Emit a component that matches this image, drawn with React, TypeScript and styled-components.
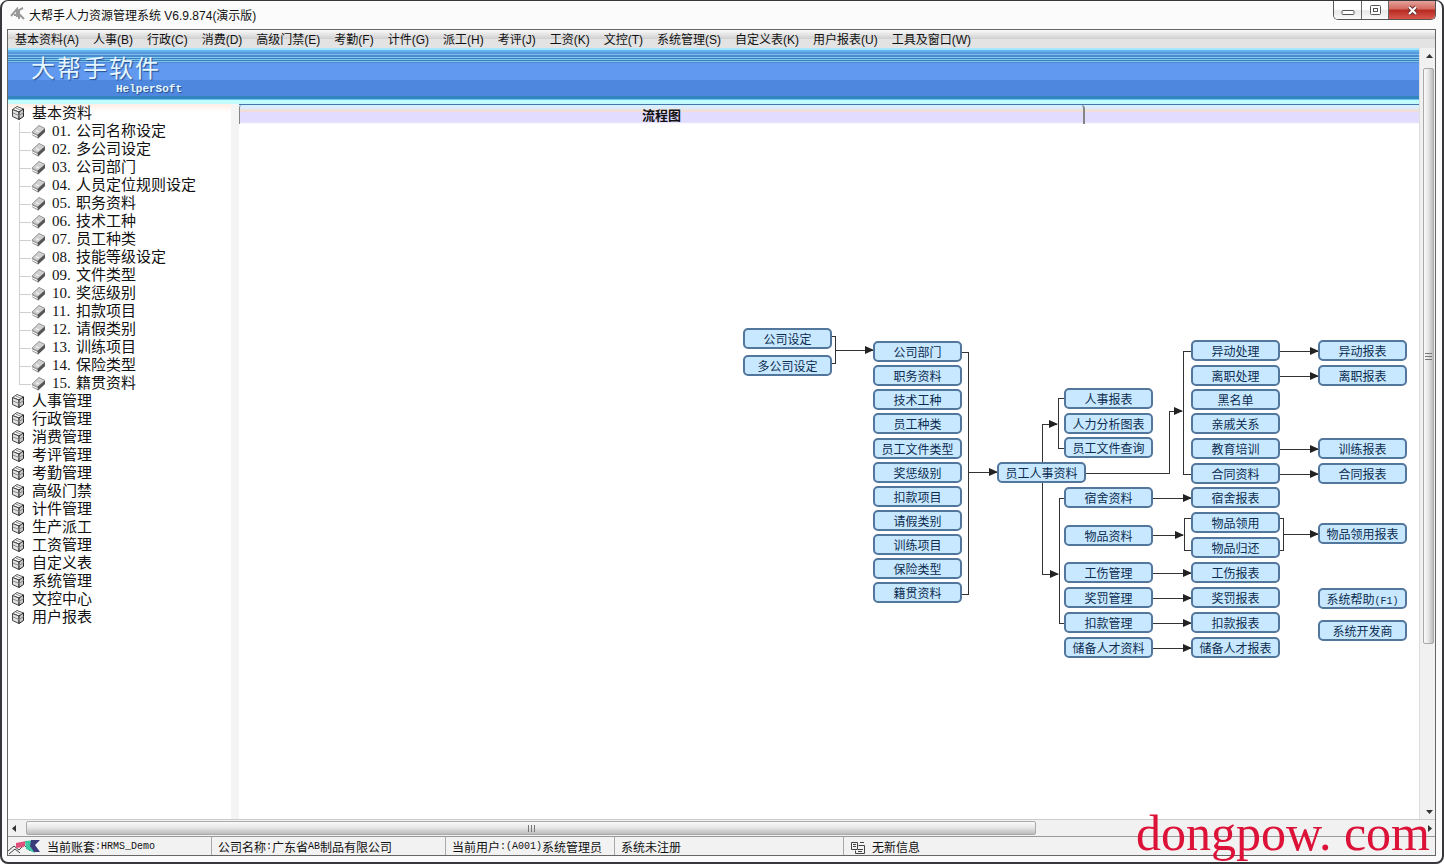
import React from "react";
import styled, { createGlobalStyle, css } from "styled-components";

const GlobalStyle = createGlobalStyle`
  * { box-sizing: border-box; }
  body {
    margin: 0;
    background: #fff;
    color: #111;
    font: 12px/16px "Open Sans", "Noto Sans CJK SC", sans-serif;
  }
  button {
    margin: 0;
    padding: 0;
    border: 0;
    background: none;
    color: inherit;
    font: inherit;
    white-space: nowrap;
  }
  ul { margin: 0; padding: 0; list-style: none; }
`;

const Frame = styled.div`
  position: relative;
  display: flex;
  flex-direction: column;
  min-height: 100vh;
  padding: 0 6px 6px 5px;
  border: 2px solid #37373b;
  border-top-width: 1px;
  border-radius: 8px;
  background: #fbfbfb;
`;

const TitleBar = styled.header`
  display: flex;
  align-items: flex-start;
  height: 28px;
  padding-left: 3px;
`;

const TitleIcon = styled.svg`
  width: 16px;
  height: 14px;
  margin-top: 6px;
`;

const Title = styled.h1`
  flex: 1;
  margin: 5px 0 0 3px;
  font-family: "Liberation Sans", "Noto Sans CJK SC", sans-serif;
  font-size: 12px;
  font-weight: 400;
  line-height: 20px;
`;

const CaptionButtons = styled.div`
  display: flex;
  height: 19px;
  border: 1px solid #555;
  border-top: 0;
  border-radius: 0 0 5px 5px;
  overflow: hidden;
`;

const CaptionButton = styled.button<{ $close?: boolean }>`
  display: grid;
  place-items: center;
  width: ${(p) => (p.$close ? 47 : 27)}px;
  border-left: 1px solid #666;
  background: linear-gradient(#fff 0 45%, #e8e8e8 55%, #fafafa);
  &:first-child { border-left: 0; }
  ${(p) =>
    p.$close &&
    css`
      background: linear-gradient(#e2a39b 0, #d4685f 45%, #b52a20 50%, #d9564d);
    `}
`;

const Client = styled.div`
  display: flex;
  flex: 1;
  flex-direction: column;
  border: 1px solid #666;
`;

const MenuBar = styled.nav`
  display: flex;
  gap: 14px;
  height: 18px;
  padding: 2px 7px 0;
  background: linear-gradient(#fafafa, #cfcfcf 9px, #e3e3e3 9px);
  font-family: "Liberation Sans", "Noto Sans CJK SC", sans-serif;
`;

const MenuButton = styled.button`
  line-height: 16px;
`;

const Workspace = styled.div`
  display: flex;
  flex: 1;
`;

const Main = styled.div`
  display: flex;
  flex: 1;
  flex-direction: column;
  min-width: 0;
  background: #fff;
`;

const Banner = styled.div`
  height: 52px;
  padding-left: 23px;
  background: linear-gradient(
    #a6e6ff 0 2px, #62b2ec 2px 4px, #5796da 4px 6px, #78bff0 6px 7px,
    #4b8acb 7px 9px, #80cdf3 9px 10px, #3d7fbd 10px 11px, #7dc6ee 11px 12px,
    #3b7dbb 12px 13px, #7fc4f0 13px 14px, #4b88cf 14px 15px,
    #6099ef 15px 32px, #4e87de 32px 48px, #3286bd 48px 51px, #65c5f0 51px
  );
`;

const Brand = styled.div`
  display: inline-flex;
  flex-direction: column;
  color: #e4f6ff;
  text-shadow: 1px 1px 1px #234e92;
`;

const BrandName = styled.span`
  font-family: "Liberation Sans", "Noto Sans CJK SC", sans-serif;
  font-size: 24px;
  font-weight: 400;
  line-height: 42px;
  letter-spacing: 2px;
`;

const BrandLatin = styled.span`
  margin-top: -7px;
  padding-left: 85px;
  font: 700 11px/12px "Liberation Mono", monospace;
`;

const BannerEdge = styled.div`
  height: 4px;
  background: #c4fbff;
`;

const Split = styled.div`
  display: flex;
  flex: 1;
`;

const Sidebar = styled.nav`
  width: 231px;
  border-right: 8px solid #f4f4f4;
  background: linear-gradient(#ffeee5, #fff 8px);
  font-family: "Liberation Serif", "Noto Sans CJK SC", serif;
  font-size: 15px;
`;

const TreeButton = styled.button`
  display: flex;
  align-items: center;
  height: 18px;
  line-height: 18px;
`;

const GroupIcon = styled.svg`
  width: 14px;
  height: 16px;
  margin: 0 7px 0 3px;
`;

const Leaves = styled.ul`
  margin-left: 11px;
`;

const Leaf = styled.li`
  display: flex;
  align-items: center;
  height: 18px;
  background:
    linear-gradient(#cfcfcf, #cfcfcf) 0 0 / 1px 100% no-repeat,
    linear-gradient(#cfcfcf, #cfcfcf) 0 10px / 12px 1px no-repeat;
  &:last-child {
    background-size: 1px 10px, 12px 1px;
  }
`;

const LeafIcon = styled.svg`
  width: 15px;
  height: 16px;
  margin: 2px 6px 0 12px;
`;

const LeafNumber = styled.span`
  width: 24px;
  text-align: left;
`;

const Content = styled.main`
  flex: 1;
  min-width: 0;
`;

const TabStrip = styled.div`
  display: flex;
  height: 20px;
  border-top: 1px solid #4277ac;
  background: linear-gradient(#d9efff 0 2px, #f1ddd6 6px 7px, #e2dcff 7px 17px, #fff);
`;

const Tab = styled.button`
  width: 846px;
  max-width: 72%;
  border: 2px solid #858585;
  border-width: 0 2px 0 1px;
  border-radius: 3px 4px 0 0;
  font-size: 13px;
  font-weight: 700;
  line-height: 18px;
`;

const Canvas = styled.div`
  position: relative;
  height: 694px;
  overflow: hidden;
  font-family: "Noto Sans CJK SC", sans-serif;
`;

const Wires = styled.svg`
  position: absolute;
  inset: 0;
  width: 100%;
  height: 100%;
`;

const Node = styled.button`
  position: absolute;
  width: 89px;
  height: 21px;
  border: 2px solid #53779c;
  border-radius: 5px;
  background: #c8e8ff;
  color: #0c2c50;
  line-height: 17px;
`;

const NodeKey = styled.span`
  font-family: "Liberation Mono", monospace;
  font-size: 10px;
`;

const VScroll = styled.div`
  display: flex;
  flex-direction: column;
  width: 16px;
  padding: 0 1px 0 3px;
  background: #f1f1f1;
  border-left: 1px solid #ddd;
`;

const HScroll = styled.div`
  display: flex;
  height: 17px;
  border-top: 1px solid #ccc;
  background: #f1f1f1;
`;

const ArrowButton = styled.button`
  display: grid;
  place-items: center;
  min-width: 12px;
  min-height: 16px;
`;

const Track = styled.div`
  flex: 1;
`;

const thumb = css`
  display: grid;
  place-items: center;
  border: 1px solid #aaa;
  border-radius: 2px;
`;

const VThumb = styled.div`
  ${thumb}
  height: 78%;
  margin-top: 4px;
  background: linear-gradient(90deg, #fafafa, #e8e8e8 45%, #bbb);
`;

const HThumb = styled.div`
  ${thumb}
  width: 72%;
  height: 14px;
  margin: 1px 0 0 6px;
  background: linear-gradient(#fafafa, #e8e8e8 45%, #bbb);
`;

const StatusBar = styled.footer`
  display: flex;
  height: 19px;
  border-top: 1px solid #999;
  background: #f2f2f2;
  font-family: "Noto Sans CJK SC", sans-serif;
  line-height: 16px;
`;

const StatusPanel = styled.div<{ $width?: number }>`
  display: flex;
  align-items: center;
  flex: ${(p) => (p.$width ? `0 0 ${p.$width}px` : "1")};
  padding: 2px 0 0 6px;
  border-left: 1px solid #aaa;
  white-space: pre;
  &:first-child { padding-left: 0; border-left: 0; }
  svg { margin-right: 6px; }
`;

const Half = styled.span`
  font: 10px/16px "Liberation Mono", monospace;
`;

const Watermark = styled.div`
  position: absolute;
  right: 12px;
  bottom: 1px;
  color: #dc1238;
  font: 50px/56px "Liberation Serif", serif;
  pointer-events: none;
`;

const menus = [
  "基本资料(A)", "人事(B)", "行政(C)", "消费(D)", "高级门禁(E)", "考勤(F)", "计件(G)", "派工(H)",
  "考评(J)", "工资(K)", "文控(T)", "系统管理(S)", "自定义表(K)", "用户报表(U)", "工具及窗口(W)",
];

const leaves = [
  "公司名称设定", "多公司设定", "公司部门", "人员定位规则设定", "职务资料", "技术工种", "员工种类",
  "技能等级设定", "文件类型", "奖惩级别", "扣款项目", "请假类别", "训练项目", "保险类型", "籍贯资料",
];

const groups = [
  "人事管理", "行政管理", "消费管理", "考评管理", "考勤管理", "高级门禁", "计件管理", "生产派工",
  "工资管理", "自定义表", "系统管理", "文控中心", "用户报表",
];

/* Flow chart: each column has its left edge and its [top, label] nodes. */
const columns: { left: number; nodes: [number, string][] }[] = [
  { left: 504, nodes: [[204, "公司设定"], [231, "多公司设定"]] },
  {
    left: 634,
    nodes: [
      [217, "公司部门"], [241, "职务资料"], [265, "技术工种"], [289, "员工种类"], [314, "员工文件类型"],
      [338, "奖惩级别"], [362, "扣款项目"], [386, "请假类别"], [410, "训练项目"], [434, "保险类型"],
      [458, "籍贯资料"],
    ],
  },
  { left: 758, nodes: [[338, "员工人事资料"]] },
  {
    left: 825,
    nodes: [
      [264, "人事报表"], [289, "人力分析图表"], [313, "员工文件查询"], [363, "宿舍资料"], [401, "物品资料"],
      [438, "工伤管理"], [463, "奖罚管理"], [488, "扣款管理"], [513, "储备人才资料"],
    ],
  },
  {
    left: 952,
    nodes: [
      [216, "异动处理"], [241, "离职处理"], [265, "黑名单"], [289, "亲戚关系"], [314, "教育培训"],
      [339, "合同资料"], [363, "宿舍报表"], [388, "物品领用"], [413, "物品归还"], [438, "工伤报表"],
      [463, "奖罚报表"], [488, "扣款报表"], [513, "储备人才报表"],
    ],
  },
  {
    left: 1079,
    nodes: [
      [216, "异动报表"], [241, "离职报表"], [314, "训练报表"], [339, "合同报表"], [399, "物品领用报表"],
      [464, "系统帮助(F1)"], [496, "系统开发商"],
    ],
  },
];

const brackets = [
  "M593 212h3v27h-3", "M723 228h6v242h-6", "M825 274h-6v50h6", "M825 374h-5v125h5",
  "M952 227h-8v123h8", "M952 394h-7v32h7", "M1041 394h3v32h-3",
];

const arrows = [
  "M596 226H634", "M729 348H758", "M803 338V300H818", "M803 359V450H819", "M847 349H930V287H943",
  "M914 411H944", "M1044 410H1079",
  ...[374, 449, 474, 499, 524].map((y) => `M914 ${y}H952`),
  ...[227, 252, 325, 350].map((y) => `M1041 ${y}H1079`),
];

const CubeIcon = () => (
  <GroupIcon viewBox="0 0 14 16" aria-hidden="true">
    <path d="M1.500 4.500 6 1.500 12.500 4 8 7Z" fill="#fff" stroke="#555" />
    <path d="M1.500 4.500 8 7V14.500L1.500 11.500Z" fill="#e2e2e2" stroke="#444" />
    <path d="M8 7 12.500 4V11.500L8 14.500Z" fill="#c9c9c9" stroke="#222" />
    <path d="M2 8 8 10.500 12.500 7.500M4.500 3 10.500 5.500" stroke="#888" fill="none" />
  </GroupIcon>
);

const BookIcon = () => (
  <LeafIcon viewBox="0 0 15 16" aria-hidden="true">
    <path d="M1 8 8 1.500 14 4.500V8L7 14.500 1.500 11.500Z" fill="#9a9a9a" />
    <path d="M1 8 8 1.500 14 4.500 6.500 11Z" fill="#d0d0d0" stroke="#999" />
    <path d="M14 4.500V8L7 14.500 6.500 11Z" fill="#555" />
    <path d="M1.500 10 6.500 12.500M5 6.500 8 8" stroke="#fff" />
  </LeafIcon>
);

const Arrow = ({ d }: { d: string }) => (
  <svg width="7" height="7" viewBox="0 0 7 7" aria-hidden="true">
    <path d={d} fill="#333" />
  </svg>
);

const NodeLabel = ({ text }: { text: string }) => {
  const at = text.indexOf("(");
  return at < 0 ? <>{text}</> : <>{text.slice(0, at)}<NodeKey>{text.slice(at)}</NodeKey></>;
};

export default function App() {
  return (
    <>
      <GlobalStyle />
      <Frame>
        <TitleBar>
          <TitleIcon viewBox="0 0 16 14" aria-hidden="true">
            <path d="M1 9 7 2v8M9 12V3l4-2M9 7l5 5M4 8h4" fill="none" stroke="#999" strokeWidth="2" />
          </TitleIcon>
          <Title>大帮手人力资源管理系统 V6.9.874(演示版)</Title>
          <CaptionButtons>
            <CaptionButton aria-label="最小化">
              <svg width="14" height="12" viewBox="0 0 14 12"><rect x="1" y="6.500" width="12" height="4" rx="1" fill="#fff" stroke="#555" /></svg>
            </CaptionButton>
            <CaptionButton aria-label="最大化">
              <svg width="13" height="12" viewBox="0 0 13 12">
                <rect x="1.500" y="1.500" width="10" height="9" rx="1" fill="#fff" stroke="#555" />
                <rect x="4.500" y="4.500" width="4" height="3" fill="#fff" stroke="#555" />
              </svg>
            </CaptionButton>
            <CaptionButton $close aria-label="关闭">
              <svg width="13" height="11" viewBox="0 0 13 11">
                <path d="m3 2 7 7m0-7-7 7" stroke="#6b3030" strokeWidth="4" />
                <path d="m3 2 7 7m0-7-7 7" stroke="#fff" strokeWidth="2" />
              </svg>
            </CaptionButton>
          </CaptionButtons>
        </TitleBar>
        <Client>
          <MenuBar>
            {menus.map((m) => <MenuButton key={m}>{m}</MenuButton>)}
          </MenuBar>
          <Workspace>
            <Main>
              <Banner>
                <Brand>
                  <BrandName>大帮手软件</BrandName>
                  <BrandLatin>HelperSoft</BrandLatin>
                </Brand>
              </Banner>
              <BannerEdge />
              <Split>
                <Sidebar>
                  <ul>
                    <li>
                      <TreeButton><CubeIcon />基本资料</TreeButton>
                      <Leaves>
                        {leaves.map((l, i) => (
                          <Leaf key={l}>
                            <TreeButton>
                              <BookIcon />
                              <LeafNumber>{String(i + 1).padStart(2, "0")}.</LeafNumber>
                              {l}
                            </TreeButton>
                          </Leaf>
                        ))}
                      </Leaves>
                    </li>
                    {groups.map((g) => (
                      <li key={g}><TreeButton><CubeIcon />{g}</TreeButton></li>
                    ))}
                  </ul>
                </Sidebar>
                <Content>
                  <TabStrip role="tablist"><Tab role="tab" aria-selected="true">流程图</Tab></TabStrip>
                  <Canvas>
                    <Wires aria-hidden="true">
                      <defs>
                        <marker id="head" markerWidth="9" markerHeight="8" refX="8" refY="4" orient="auto" markerUnits="userSpaceOnUse">
                          <path d="M0 0 9 4 0 8Z" fill="#222" />
                        </marker>
                      </defs>
                      <g fill="none" stroke="#333" shapeRendering="crispEdges">
                        {brackets.map((d) => <path key={d} d={d} />)}
                        {arrows.map((d) => <path key={d} d={d} markerEnd="url(#head)" />)}
                      </g>
                    </Wires>
                    {columns.map((c) =>
                      c.nodes.map(([top, label]) => (
                        <Node key={label} style={{ left: c.left, top }}><NodeLabel text={label} /></Node>
                      )),
                    )}
                  </Canvas>
                </Content>
              </Split>
            </Main>
            <VScroll>
              <ArrowButton aria-label="向上滚动"><Arrow d="M0 5h7L3.500 1Z" /></ArrowButton>
              <Track>
                <VThumb>
                  <svg width="7" height="8" viewBox="0 0 7 8"><path d="M0 1.500h7M0 4.500h7M0 7.500h7" stroke="#777" /></svg>
                </VThumb>
              </Track>
              <ArrowButton aria-label="向下滚动"><Arrow d="M0 2h7L3.500 6Z" /></ArrowButton>
            </VScroll>
          </Workspace>
          <HScroll>
            <ArrowButton aria-label="向左滚动"><Arrow d="M5 0v7L1 3.500Z" /></ArrowButton>
            <Track>
              <HThumb>
                <svg width="8" height="7" viewBox="0 0 8 7"><path d="M1.500 0v7M4.500 0v7M7.500 0v7" stroke="#777" /></svg>
              </HThumb>
            </Track>
            <ArrowButton aria-label="向右滚动"><Arrow d="M2 0v7L6 3.500Z" /></ArrowButton>
          </HScroll>
          <StatusBar>
            <StatusPanel $width={203}>
              <svg width="33" height="16" viewBox="0 0 33 16" aria-hidden="true">
                <path d="M0 12 6 7l5 4 5-5 6 6M1 15l6-5 5 4" fill="none" stroke="#444" />
                <path d="M8 4 18 2l-2 6-8 1Z" fill="#e0507c" />
                <path d="M17 2 28 1l-5 6 4 7-9-4Z" fill="#3fc6a0" />
                <path d="M23 1h9l-5 5 5 7h-6l-4-6Z" fill="#3b3b7c" />
              </svg>
              当前账套<Half>:HRMS_Demo</Half>
            </StatusPanel>
            <StatusPanel $width={234}>公司名称<Half>:</Half>广东省<Half>AB</Half>制品有限公司</StatusPanel>
            <StatusPanel $width={169}>当前用户<Half>:(A001)</Half>系统管理员</StatusPanel>
            <StatusPanel $width={229}>系统未注册</StatusPanel>
            <StatusPanel>
              <svg width="16" height="15" viewBox="0 0 16 15" aria-hidden="true">
                <path d="M1.500 2.500h6v7h-6ZM8.500 5.500h6v8h-9v-3M3 4.500h3M3 6.500h3M8 9.500h5M8 11.500h4M10 2.500h4" fill="none" stroke="#444" />
              </svg>
              无新信息
            </StatusPanel>
          </StatusBar>
        </Client>
        <Watermark>dongpow. com</Watermark>
      </Frame>
    </>
  );
}
